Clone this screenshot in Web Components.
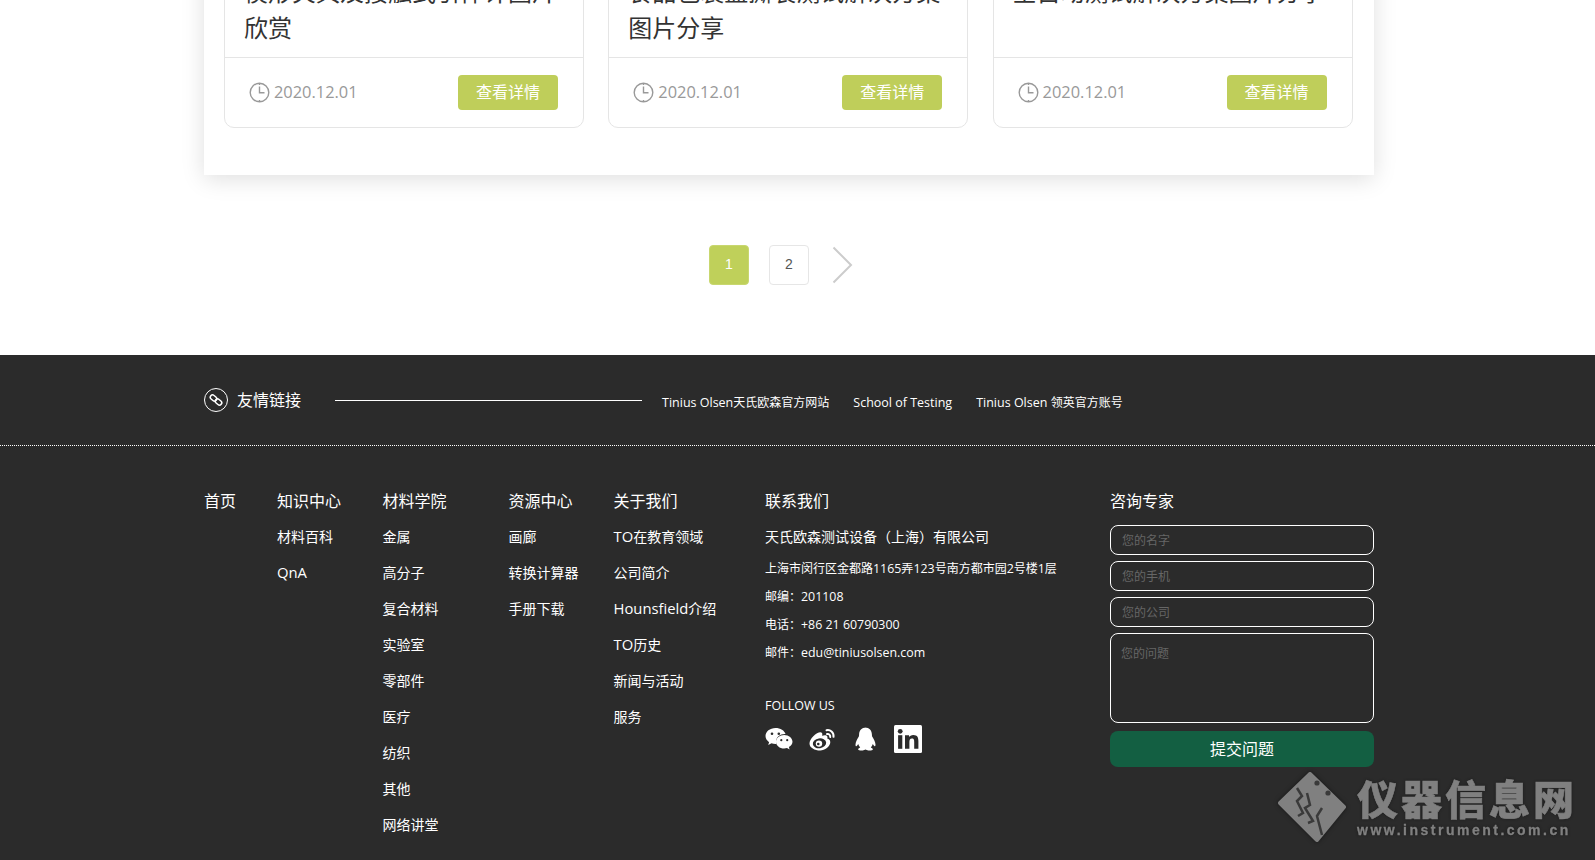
<!DOCTYPE html>
<html lang="zh-CN">
<head>
<meta charset="utf-8">
<title>图片分享</title>
<style>
  html, body { margin: 0; height: 860px; overflow: hidden; background: #fff; }
  body { font-family: "Open Sans", "Noto Sans CJK SC", sans-serif; }
</style>
</head>
<body>
<card-panel>
  <news-card title="楔形夹具及接触式引伸计图片欣赏"></news-card>
  <news-card title="食品包装盖撕裂测试解决方案图片分享"></news-card>
  <news-card title="全自动测试解决方案图片分享"></news-card>
</card-panel>
<page-nav></page-nav>
<site-footer>
  <friend-links slot="links"></friend-links>
  <nav-col heading="首页" slot="cols" style="width:73px"></nav-col>
  <nav-col heading="知识中心" items="材料百科,QnA" slot="cols" style="width:105.5px"></nav-col>
  <nav-col heading="材料学院" items="金属,高分子,复合材料,实验室,零部件,医疗,纺织,其他,网络讲堂" slot="cols" style="width:126px"></nav-col>
  <nav-col heading="资源中心" items="画廊,转换计算器,手册下载" slot="cols" style="width:105px"></nav-col>
  <nav-col heading="关于我们" items="TO在教育领域,公司简介,Hounsfield介绍,TO历史,新闻与活动,服务" slot="cols" style="width:151.5px"></nav-col>
  <contact-info slot="cols" style="width:345px"></contact-info>
  <ask-form slot="cols" style="width:264px"></ask-form>
  <water-mark slot="mark"></water-mark>
</site-footer>

<script>
// latin runs are a bit wider in the reference than the CJK size gives
function latin(text) {
  return text.replace(/[A-Za-z0-9@.+][A-Za-z0-9@.+ ]*/g, '<span class="l">$&</span>');
}

class CardPanel extends HTMLElement {
  constructor() {
    super();
    this.attachShadow({ mode: 'open' });
  }

  connectedCallback() {
    this.shadowRoot.innerHTML = `
      <style>
        :host {
          display: flex;
          gap: 24.300px;
          box-sizing: border-box;
          width: 1170px;
          margin: -60px 0 0 204px;
          padding: 20px 20px 47px;
          background: #fff;
          box-shadow: 0 4px 22px rgba(0, 0, 0, .13);
        }
      </style>
      <slot></slot>
    `;
  }
}
customElements.define('card-panel', CardPanel);

class NewsCard extends HTMLElement {
  constructor() {
    super();
    this.attachShadow({ mode: 'open' });
  }

  connectedCallback() {
    this.shadowRoot.innerHTML = `
      <style>
        :host {
          display: block;
          box-sizing: border-box;
          width: 360px;
          border: 1px solid #e5e5e5;
          border-radius: 10px;
        }
        h3 {
          box-sizing: border-box;
          height: 97px;
          margin: 0;
          padding: 13px 19px 0;
          border-bottom: 1px solid #e5e5e5;
          font-size: 24px;
          font-weight: 400;
          line-height: 36px;
          color: #333;
        }
        .meta {
          display: flex;
          align-items: center;
          height: 69px;
          padding: 0 25px 0 24px;
        }
        svg { flex: none; margin-right: 4px; }
        time { flex: 1; margin-top: -2px; font-size: 16.400px; color: #999; }
        a {
          width: 100px;
          height: 35px;
          border-radius: 4px;
          background: #bfce5a;
          color: #fff;
          font-size: 16px;
          line-height: 35px;
          text-align: center;
        }
      </style>
      <h3>${this.getAttribute('title')}</h3>
      <div class="meta">
        <svg width="21" height="21" viewBox="0 0 21 21" fill="none" stroke="#999" stroke-width="1.4">
          <circle cx="10.5" cy="10.5" r="9.3"/>
          <path d="M10.5 4.5v6.3h5M10.5 1.5v1.6M10.5 18v1.6"/>
        </svg>
        <time>2020.12.01</time>
        <a>查看详情</a>
      </div>
    `;
  }
}
customElements.define('news-card', NewsCard);

class PageNav extends HTMLElement {
  constructor() {
    super();
    this.attachShadow({ mode: 'open' });
  }

  connectedCallback() {
    this.shadowRoot.innerHTML = `
      <style>
        :host {
          display: flex;
          align-items: center;
          gap: 20px;
          padding: 70px 0 70px 709px;
          font-family: "Liberation Sans", sans-serif;
          font-size: 14px;
        }
        span {
          box-sizing: border-box;
          width: 40px;
          height: 40px;
          border: 1px solid #e6e6e6;
          border-radius: 4px;
          color: #555;
          line-height: 36px;
          text-align: center;
        }
        .on { background: #bfd05a; border-color: #c8d76f; color: #fff; }
        svg { margin-left: 3px; }
      </style>
      <span class="on">1</span>
      <span>2</span>
      <svg width="21" height="38" viewBox="0 0 21 38" fill="none" stroke="#ccc" stroke-width="2">
        <path d="M1.500 1.500 19 19 1.500 36.500"/>
      </svg>
    `;
  }
}
customElements.define('page-nav', PageNav);

class SiteFooter extends HTMLElement {
  constructor() {
    super();
    this.attachShadow({ mode: 'open' });
  }

  connectedCallback() {
    this.shadowRoot.innerHTML = `
      <style>
        :host {
          display: block;
          position: relative;
          height: 505px;
          overflow: hidden;
          background: #2b2b2b;
          color: #fff;
        }
        .cols {
          display: flex;
          padding: 43px 0 0 204px;
        }
      </style>
      <slot name="links"></slot>
      <div class="cols"><slot name="cols"></slot></div>
      <slot name="mark"></slot>
    `;
  }
}
customElements.define('site-footer', SiteFooter);

class FriendLinks extends HTMLElement {
  constructor() {
    super();
    this.attachShadow({ mode: 'open' });
  }

  connectedCallback() {
    this.shadowRoot.innerHTML = `
      <style>
        :host {
          display: flex;
          align-items: center;
          box-sizing: border-box;
          height: 91px;
          padding-left: 204px;
          border-bottom: 1px dotted #fff;
        }
        svg { flex: none; margin-right: 9px; }
        b { margin-top: -2px; font-size: 16px; font-weight: 400; }
        i { width: 307px; height: 1px; margin: 0 20px 0 34px; background: #fff; }
        a { margin: 4px 24px 0 0; font-size: 12px; color: #fff; white-space: nowrap; }
        .l { font-size: 12.500px; line-height: 0; }
      </style>
      <svg width="24" height="24" viewBox="0 0 24 24" fill="none" stroke="#fff">
        <circle cx="12" cy="12" r="11.500"/>
        <g stroke-width="1.500">
          <rect x="6" y="7.700" width="7" height="4.600" rx="2.300" transform="rotate(40 9.500 10)"/>
          <rect x="11" y="11.700" width="7" height="4.600" rx="2.300" transform="rotate(40 14.500 14)"/>
        </g>
      </svg>
      <b>友情链接</b>
      <i></i>
      <a>${latin('Tinius Olsen')}天氏欧森官方网站</a>
      <a>${latin('School of Testing')}</a>
      <a>${latin('Tinius Olsen ')}领英官方账号</a>
    `;
  }
}
customElements.define('friend-links', FriendLinks);

class NavCol extends HTMLElement {
  constructor() {
    super();
    this.attachShadow({ mode: 'open' });
  }

  connectedCallback() {
    const items = (this.getAttribute('items') || '').split(',').filter(Boolean);
    this.shadowRoot.innerHTML = `
      <style>
        :host { display: block; flex: none; }
        h4 { height: 30px; margin: 0; font-size: 16px; font-weight: 400; line-height: 24px; }
        a { display: block; font-size: 14px; line-height: 36px; height: 36px; }
        .l { font-size: 14.800px; line-height: 0; }
      </style>
      <h4>${this.getAttribute('heading')}</h4>
      ${items.map(item => `<a>${latin(item)}</a>`).join('')}
    `;
  }
}
customElements.define('nav-col', NavCol);

class ContactInfo extends HTMLElement {
  constructor() {
    super();
    this.attachShadow({ mode: 'open' });
  }

  connectedCallback() {
    this.shadowRoot.innerHTML = `
      <style>
        :host { display: block; flex: none; }
        h4 { height: 30px; margin: 0; font-size: 16px; font-weight: 400; line-height: 24px; }
        .name { font-size: 14px; line-height: 36px; height: 36px; }
        p { height: 28px; margin: 0; font-size: 12px; line-height: 28px; }
        .l { font-size: 12.400px; line-height: 0; }
        .addr { white-space: nowrap; }
        .follow { margin-top: 29px; font-size: 12.500px; line-height: 20px; }
        .icons { display: flex; gap: 16px; align-items: center; height: 28px; margin-top: 9px; }
      </style>
      <h4>联系我们</h4>
      <div class="name">天氏欧森测试设备（上海）有限公司</div>
      <p class="addr">${latin('上海市闵行区金都路1165弄123号南方都市园2号楼1层')}</p>
      <p>${latin('邮编：201108')}</p>
      <p>${latin('电话：+86 21 60790300')}</p>
      <p>${latin('邮件：edu@tiniusolsen.com')}</p>
      <div class="follow">FOLLOW US</div>
      <div class="icons">
        <svg width="28" height="24" viewBox="0 0 28 24">
          <path fill="#fff" d="M10.500 1C4.900 1 .5 4.600.5 9.100c0 2.500 1.400 4.600 3.600 6.100l-.9 2.900 3.300-1.800c1.200.4 2.500.6 4 .6h.8a8 8 0 0 1-.3-2.100c0-4.300 3.900-7.700 8.800-7.700h.7C19.500 3.500 15.400 1 10.500 1z"/>
          <circle cx="7" cy="6.700" r="1.300" fill="#2b2b2b"/><circle cx="13.800" cy="6.700" r="1.300" fill="#2b2b2b"/>
          <path fill="#fff" d="M27.500 14.700c0-3.800-3.700-6.800-8.300-6.800S11 10.900 11 14.700s3.600 6.800 8.200 6.800c1 0 1.900-.1 2.800-.4l2.600 1.400-.7-2.400c2.200-1.300 3.600-3.300 3.600-5.400z"/>
          <circle cx="16.300" cy="13.200" r="1.100" fill="#2b2b2b"/><circle cx="22.200" cy="13.200" r="1.100" fill="#2b2b2b"/>
        </svg>
        <svg width="27" height="23" viewBox="0 0 27 23">
          <path fill="#fff" d="M11.300 22.500C5.700 22.500.5 19.800.5 15.500c0-2.300 1.400-4.900 3.800-7.300 3.300-3.300 7.100-4.800 8.500-3.400.6.600.7 1.700.3 3 1.900-.6 4.300-.8 5.100.4.400.6.400 1.400 0 2.400 1.800.6 3.100 1.700 3.100 3.700 0 4.100-5.700 8.200-10 8.200z"/>
          <ellipse cx="10.500" cy="15.300" rx="6.700" ry="4.900" fill="#2b2b2b" transform="rotate(-8 10.500 15.300)"/>
          <circle cx="10" cy="15.600" r="3.200" fill="#fff"/>
          <circle cx="9.300" cy="16" r="1.300" fill="#2b2b2b"/>
          <path fill="none" stroke="#fff" stroke-width="2" stroke-linecap="round" d="M17.500 2.200c3.700-.9 7.500 2.200 7 6.600M18 6c1.900-.4 3.500 1.100 3.200 3"/>
        </svg>
        <svg width="24" height="25" viewBox="0 0 24 25" style="margin-left:2px">
          <path fill="#fff" d="M12 .5c-4.400 0-6.800 3-6.900 7-.1 1 0 1.500-.4 2.300-1.400 2.200-3.100 5.100-3.200 7.700-.1 1.800.8 2.300 1.700 1.100l1-1.500c.3 1.300 1 2.400 2 3.300-1.400.5-2.300 1.200-2 2.100.3 1 2.500 1.300 4.500 1 1.200-.2 2-.6 2.800-1 .8.400 1.600.8 2.800 1 2 .3 4.200 0 4.500-1 .3-.9-.6-1.600-2-2.100 1-.9 1.700-2 2-3.300l1 1.500c.9 1.200 1.800.7 1.700-1.100-.1-2.600-1.800-5.500-3.200-7.700-.4-.8-.3-1.300-.4-2.300-.1-4-2.500-7-6.900-7z"/>
        </svg>
        <svg width="28" height="28" viewBox="0 0 28 28">
          <rect width="28" height="28" rx="1.500" fill="#fff"/>
          <g fill="#2b2b2b">
            <circle cx="6.200" cy="6.300" r="2.400"/>
            <rect x="4.100" y="10.200" width="4.200" height="13.600"/>
            <path d="M11 10.200h4v1.900c.7-1.200 2.200-2.200 4.300-2.200 4.300 0 5.100 2.800 5.100 6.500v7.400h-4.200v-6.600c0-1.600 0-3.600-2.200-3.600s-2.600 1.700-2.600 3.500v6.700H11z"/>
          </g>
        </svg>
      </div>
    `;
  }
}
customElements.define('contact-info', ContactInfo);

class AskForm extends HTMLElement {
  constructor() {
    super();
    this.attachShadow({ mode: 'open' });
  }

  connectedCallback() {
    this.shadowRoot.innerHTML = `
      <style>
        :host { display: flex; flex-direction: column; gap: 6px; flex: none; }
        h4 { height: 30px; margin: 0; font-size: 16px; font-weight: 400; line-height: 24px; }
        input, textarea {
          display: block;
          box-sizing: border-box;
          width: 264px;
          height: 30px;
          margin: 0;
          padding: 0 11px 2px;
          border: 1px solid #fff;
          border-radius: 8px;
          background: transparent;
          color: #fff;
          font: 12px "Noto Sans CJK SC", sans-serif;
          outline: none;
          resize: none;
        }
        textarea { height: 90px; padding: 10px 10px; }
        ::placeholder { color: #666; opacity: 1; }
        button {
          height: 36px;
          margin-top: 2px;
          padding: 0 0 2px;
          border: 0;
          border-radius: 8px;
          background: #135f42;
          color: #fff;
          font: 16px "Noto Sans CJK SC", sans-serif;
        }
      </style>
      <h4>咨询专家</h4>
      <input placeholder="您的名字">
      <input placeholder="您的手机">
      <input placeholder="您的公司">
      <textarea placeholder="您的问题"></textarea>
      <button>提交问题</button>
    `;
  }
}
customElements.define('ask-form', AskForm);

class WaterMark extends HTMLElement {
  constructor() {
    super();
    this.attachShadow({ mode: 'open' });
  }

  connectedCallback() {
    this.shadowRoot.innerHTML = `
      <style>
        :host {
          position: absolute;
          left: 1277px;
          top: 415px;
          display: flex;
          gap: 10px;
          color: #808080;
          text-shadow: 0 0 3px #161616;
          white-space: nowrap;
          filter: blur(.5px);
        }
        svg { flex: none; filter: drop-shadow(0 0 2px #161616); }
        .cn {
          height: 43px;
          margin-top: 6px;
          font-family: "Noto Sans CJK SC", sans-serif;
          font-size: 41px;
          font-weight: 900;
          line-height: 43px;
          letter-spacing: 3px;
          -webkit-text-stroke: .6px #808080;
        }
        .en {
          margin-top: 3px;
          font-family: "Liberation Sans", sans-serif;
          font-size: 14px;
          font-weight: 700;
          line-height: 16px;
          letter-spacing: 2.500px;
          -webkit-text-stroke: .3px #808080;
        }
      </style>
      <svg width="70" height="74" viewBox="0 0 70 74">
        <path fill="#808080" stroke="#808080" stroke-width="4" stroke-linejoin="round" d="M33 4 67 37 40 70 3 33z"/>
        <g fill="none" stroke="#3a3a3a" stroke-width="2.500">
          <path d="M20 18l5 8-5 5 6 12-5 3"/>
          <path d="M30 23l3 12-5 3 8 13-5 2"/>
          <path d="M45 38l-5 8 5 19"/>
        </g>
        <circle cx="40" cy="13" r="2.600" fill="#3a3a3a"/>
        <circle cx="51" cy="23" r="2.600" fill="#3a3a3a"/>
      </svg>
      <div>
        <div class="cn">仪器信息网</div>
        <div class="en">www.instrument.com.cn</div>
      </div>
    `;
  }
}
customElements.define('water-mark', WaterMark);
</script>
</body>
</html>
